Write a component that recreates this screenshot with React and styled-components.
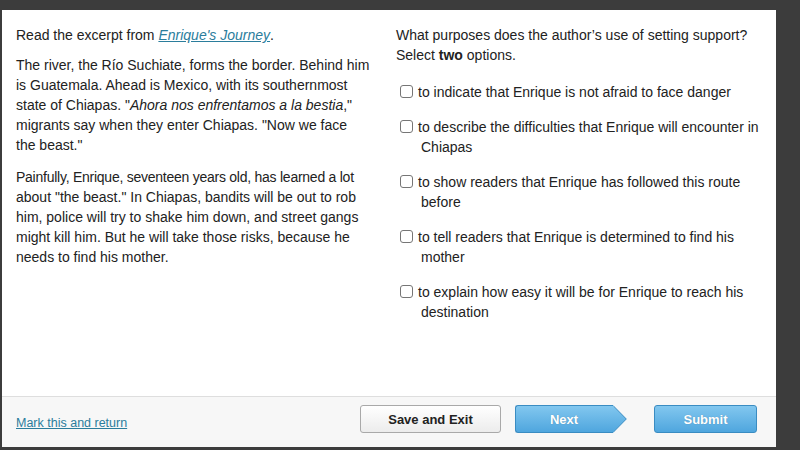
import React from "react";
import styled, { createGlobalStyle } from "styled-components";

const Global = createGlobalStyle`
  html, body { margin: 0; padding: 0; background: #3c3c3c; }
  body { width: 800px; height: 450px; overflow: hidden; }
`;

const Frame = styled.div`
  width: 800px;
  height: 450px;
  box-sizing: border-box;
  padding: 10px 24px 3px 2px;
  background: #3c3c3c;
  display: flex;
`;

const Page = styled.div`
  flex: 1;
  display: flex;
  flex-direction: column;
  background: #fff;
`;

const Main = styled.div`
  flex: 1;
  display: grid;
  grid-template-columns: 380px 1fr;
  font-family: "Liberation Sans", Arial, sans-serif;
  font-size: 14px;
  line-height: 20px;
  color: #222;
`;

const Column = styled.div`
  padding: ${(p) => p.$pad};
`;

const Para = styled.p`
  margin: 0 0 ${(p) => p.$gap ?? 10}px;
`;

const Tight = styled.span`
  letter-spacing: -0.25px;
`;

const Link = styled.a`
  color: #2b7d9c;
  text-decoration: underline;
`;

const Options = styled.div`
  display: flex;
  flex-direction: column;
  gap: 15px;
  margin-top: 17px;
`;

const Option = styled.label`
  display: block;
  padding-left: 25px;
  text-indent: -21px;
`;

const Box = styled.span`
  display: inline-block;
  width: 11px;
  height: 11px;
  border: 1px solid #767676;
  border-radius: 3px;
  background: #fff;
  margin-right: 5px;
  vertical-align: -1px;
  text-indent: 0;
`;

const Footer = styled.div`
  height: 51px;
  border-top: 1px solid #dedede;
  background: #f7f7f7;
  display: flex;
  align-items: flex-start;
  padding: 8px 19px 0 14px;
  box-sizing: border-box;
`;

const MarkLink = styled.a`
  font-family: "Liberation Sans", Arial, sans-serif;
  font-size: 12.5px;
  color: #2b7d9c;
  text-decoration: underline;
  margin-top: 11px;
  margin-right: auto;
`;

const Button = styled.button`
  height: 28px;
  width: ${(p) => p.$w}px;
  box-sizing: border-box;
  border-radius: 3px;
  font-family: "Liberation Sans", Arial, sans-serif;
  font-weight: bold;
  font-size: 13px;
  padding: 0;
  cursor: pointer;
`;

const GreyButton = styled(Button)`
  border: 1px solid #a9a9a9;
  background: linear-gradient(#ffffff, #ececec);
  color: #222;
  margin-right: 14px;
`;

const BlueButton = styled(Button)`
  border: 1px solid #3a8cc2;
  background: linear-gradient(#82c7ef, #4fa6de);
  color: #fff;
  text-shadow: 0 0 1px rgba(0, 0, 0, 0.25);
`;

const NextWrap = styled.div`
  display: flex;
  align-items: stretch;
  height: 28px;
  margin-right: 27px;
`;

const NextBody = styled(BlueButton)`
  border-right: 1px solid #5aaee2;
  border-radius: 3px 0 0 3px;
`;

const Arrow = styled.svg`
  display: block;
  width: 15px;
  height: 28px;
  margin-left: -1px;
`;

export default function App() {
  return (
    <>
      <Global />
      <Frame>
        <Page>
          <Main>
            <Column $pad="15px 4px 0 14px">
              <Para>
                Read the excerpt from <Link href="#"><i>Enrique's Journey</i></Link>.
              </Para>
              <Para $gap={12}>
                The river, the Río Suchiate, forms the border. Behind him is Guatemala. Ahead is
                Mexico, with its southernmost state of Chiapas. "<i>Ahora nos enfrentamos a la bestia</i>,"
                migrants say when they enter Chiapas. "Now we face the{"\u00a0"}beast."
              </Para>
              <Para>
                <Tight>Painfully, Enrique, seventeen years old, has learned a lot</Tight> about "the beast." In
                Chiapas, bandits will be out to rob him, police will try to shake him down, and street
                gangs might kill him. But he will take those risks, because he needs to find his mother.
              </Para>
            </Column>
            <Column $pad="15px 8px 0 14px">
              <Para $gap={0}>
                What purposes does the author’s use of setting support? Select <b>two</b> options.
              </Para>
              <Options>
                <Option><Box />to indicate that Enrique is not afraid to face danger</Option>
                <Option><Box />to describe the difficulties that Enrique will encounter in Chiapas</Option>
                <Option><Box />to show readers that Enrique has followed this route before</Option>
                <Option><Box />to tell readers that Enrique is determined to find his mother</Option>
                <Option><Box />to explain how easy it will be for Enrique to reach his destination</Option>
              </Options>
            </Column>
          </Main>
          <Footer>
            <MarkLink href="#">Mark this and return</MarkLink>
            <GreyButton $w={141}>Save and Exit</GreyButton>
            <NextWrap>
              <NextBody $w={98}>Next</NextBody>
              <Arrow viewBox="0 0 15 28">
                <defs>
                  <linearGradient id="ag" x1="0" y1="0" x2="0" y2="1">
                    <stop offset="0" stopColor="#82c7ef" />
                    <stop offset="1" stopColor="#4fa6de" />
                  </linearGradient>
                </defs>
                <path d="M0 0.5 H1 L14.3 14 L1 27.5 H0 Z" fill="url(#ag)" stroke="#3a8cc2" strokeWidth="1" />
                <rect x="0" y="1" width="1.5" height="26" fill="url(#ag)" />
              </Arrow>
            </NextWrap>
            <BlueButton $w={103}>Submit</BlueButton>
          </Footer>
        </Page>
      </Frame>
    </>
  );
}
